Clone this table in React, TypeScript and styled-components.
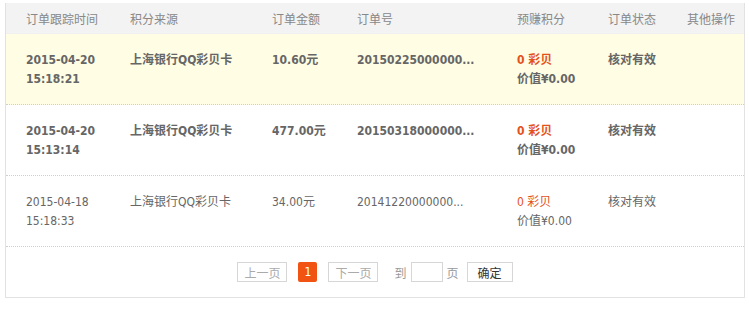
import React from "react";
import styled, { createGlobalStyle } from "styled-components";

const GlobalStyle = createGlobalStyle`
  body {
    margin: 0;
    background: #fff;
    font-family: "DejaVu Sans Condensed", "DejaVu Sans", "Noto Sans CJK SC", sans-serif;
    font-size: 12px;
    color: #666;
  }
`;

const COLS = "104px 142px 85px 160px 91px 79px 78px";

const Panel = styled.div`
  margin: 3px 4px 0 5px;
  border: 1px solid #e2e2e2;
  border-top: none;
`;

const HeadRow = styled.div`
  display: grid;
  grid-template-columns: ${COLS};
  height: 30px;
  align-items: center;
  background: #f3f3f3;
  color: #888;
  border-bottom: 1px solid #f0f0f0;
`;

const HeadCell = styled.div`
  padding-left: 20px;
  white-space: nowrap;
`;

const Row = styled.div<{ $active?: boolean; $bold?: boolean }>`
  display: grid;
  grid-template-columns: ${COLS};
  height: 71px;
  box-sizing: border-box;
  padding-top: 17px;
  background: ${(p) => (p.$active ? "#fffde4" : "#fff")};
  border-bottom: 1px dotted #cfcfcf;
  font-weight: ${(p) => (p.$bold ? "bold" : "normal")};
  line-height: 19px;
`;

const Cell = styled.div`
  padding-left: 20px;
  white-space: nowrap;
`;

const Points = styled.div`
  color: #e4521c;
`;

const Pager = styled.div`
  height: 50px;
  display: flex;
  align-items: center;
  justify-content: center;
  gap: 12px;
`;

const PageBtn = styled.span<{ $dark?: boolean }>`
  display: inline-flex;
  align-items: center;
  justify-content: center;
  box-sizing: border-box;
  height: 20px;
  padding: 0 ${(p) => (p.$dark ? "10px" : "6px")};
  border: 1px solid #d6d6d6;
  color: ${(p) => (p.$dark ? "#333" : "#aaa")};
  font-family: "Noto Sans CJK SC", sans-serif;
  background: #fff;
`;

const CurrentPage = styled.span`
  display: inline-flex;
  align-items: center;
  justify-content: center;
  width: 19px;
  height: 20px;
  margin: 0 -1px;
  background: #f05312;
  color: #fff;
  border-radius: 2px;
`;

const GoTo = styled.span`
  display: inline-flex;
  align-items: center;
  gap: 4px;
  margin: 0 -4px 0 4px;
  color: #999;
  font-family: "Noto Sans CJK SC", sans-serif;
`;

const PageInput = styled.span`
  display: inline-block;
  box-sizing: border-box;
  width: 32px;
  height: 20px;
  border: 1px solid #d6d6d6;
`;

const rows = [
  { date: "2015-04-20", time: "15:18:21", amount: "10.60元", order: "20150225000000...", active: true, bold: true },
  { date: "2015-04-20", time: "15:13:14", amount: "477.00元", order: "20150318000000...", active: false, bold: true },
  { date: "2015-04-18", time: "15:18:33", amount: "34.00元", order: "20141220000000...", active: false, bold: false },
];

export default function App() {
  return (
    <>
      <GlobalStyle />
      <Panel>
        <HeadRow>
          <HeadCell>订单跟踪时间</HeadCell>
          <HeadCell>积分来源</HeadCell>
          <HeadCell>订单金额</HeadCell>
          <HeadCell>订单号</HeadCell>
          <HeadCell>预赚积分</HeadCell>
          <HeadCell>订单状态</HeadCell>
          <HeadCell>其他操作</HeadCell>
        </HeadRow>
        {rows.map((r) => (
          <Row key={r.time} $active={r.active} $bold={r.bold}>
            <Cell>
              <div>{r.date}</div>
              <div>{r.time}</div>
            </Cell>
            <Cell>上海银行QQ彩贝卡</Cell>
            <Cell>{r.amount}</Cell>
            <Cell>{r.order}</Cell>
            <Cell>
              <Points>0 彩贝</Points>
              <div>价值¥0.00</div>
            </Cell>
            <Cell>核对有效</Cell>
            <Cell />
          </Row>
        ))}
        <Pager>
          <PageBtn>上一页</PageBtn>
          <CurrentPage>1</CurrentPage>
          <PageBtn>下一页</PageBtn>
          <GoTo>
            到
            <PageInput />
            页
          </GoTo>
          <PageBtn $dark>确定</PageBtn>
        </Pager>
      </Panel>
    </>
  );
}
